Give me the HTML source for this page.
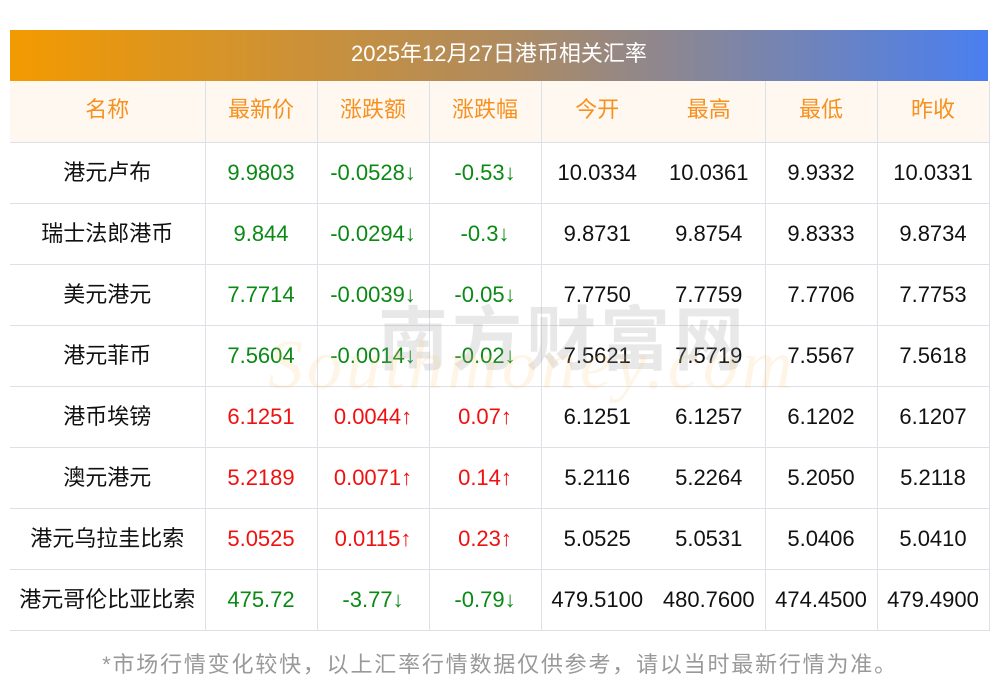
<!DOCTYPE html>
<html><head><meta charset="utf-8"><style>
body{margin:0;width:1000px;height:697px;background:#fff;font-family:"Liberation Sans","Noto Sans CJK SC",sans-serif;position:relative;overflow:hidden}
.bar{position:absolute;left:10px;top:30px;width:978px;height:51px;background:linear-gradient(90deg,#f39a00,#b08b5e 50%,#4a7ff0);color:#fff;font-size:22px;line-height:47px;text-align:center}
table{position:absolute;left:10px;top:81px;width:979px;border-collapse:collapse;table-layout:fixed}
tr{height:61px}
td{height:61px;box-sizing:border-box;border-bottom:1px solid #dfdfe8;text-align:center;font-size:22px;line-height:24px;color:#111;padding:0;overflow:hidden}
tr:first-child td{background:#fff8f0;color:#f7901e;padding-bottom:3px}
.l{border-right:1px solid #dfdfe8}
.g{color:#0a8a14}.r{color:#f01010}
.note{position:absolute;top:650px;left:0;width:1000px;text-align:center;font-size:22px;line-height:30px;color:#999;letter-spacing:1.8px}
.wm{position:absolute;font-size:70px;color:rgba(150,150,150,.22);left:378px;top:284px;letter-spacing:4px;font-weight:bold}
.wm2{position:absolute;font-family:"Liberation Serif",serif;font-style:italic;font-size:70px;color:rgba(250,200,120,.18);left:268px;top:326px;letter-spacing:4px}
</style></head><body>
<div class="bar">2025年12月27日港币相关汇率</div>
<table>
<colgroup><col style="width:195px"><col style="width:112px"><col style="width:112px"><col style="width:112px"><col style="width:112px"><col style="width:112px"><col style="width:112px"><col style="width:112px"></colgroup>
<tr><td class="l">名称</td><td class="l">最新价</td><td class="l">涨跌额</td><td class="l">涨跌幅</td><td>今开</td><td class="l">最高</td><td class="l">最低</td><td class="l">昨收</td></tr>
<tr><td class="l">港元卢布</td><td class="l g">9.9803</td><td class="l g">-0.0528↓</td><td class="l g">-0.53↓</td><td>10.0334</td><td class="l">10.0361</td><td class="l">9.9332</td><td class="l">10.0331</td></tr>
<tr><td class="l">瑞士法郎港币</td><td class="l g">9.844</td><td class="l g">-0.0294↓</td><td class="l g">-0.3↓</td><td>9.8731</td><td class="l">9.8754</td><td class="l">9.8333</td><td class="l">9.8734</td></tr>
<tr><td class="l">美元港元</td><td class="l g">7.7714</td><td class="l g">-0.0039↓</td><td class="l g">-0.05↓</td><td>7.7750</td><td class="l">7.7759</td><td class="l">7.7706</td><td class="l">7.7753</td></tr>
<tr><td class="l">港元菲币</td><td class="l g">7.5604</td><td class="l g">-0.0014↓</td><td class="l g">-0.02↓</td><td>7.5621</td><td class="l">7.5719</td><td class="l">7.5567</td><td class="l">7.5618</td></tr>
<tr><td class="l">港币埃镑</td><td class="l r">6.1251</td><td class="l r">0.0044↑</td><td class="l r">0.07↑</td><td>6.1251</td><td class="l">6.1257</td><td class="l">6.1202</td><td class="l">6.1207</td></tr>
<tr><td class="l">澳元港元</td><td class="l r">5.2189</td><td class="l r">0.0071↑</td><td class="l r">0.14↑</td><td>5.2116</td><td class="l">5.2264</td><td class="l">5.2050</td><td class="l">5.2118</td></tr>
<tr><td class="l">港元乌拉圭比索</td><td class="l r">5.0525</td><td class="l r">0.0115↑</td><td class="l r">0.23↑</td><td>5.0525</td><td class="l">5.0531</td><td class="l">5.0406</td><td class="l">5.0410</td></tr>
<tr><td class="l">港元哥伦比亚比索</td><td class="l g">475.72</td><td class="l g">-3.77↓</td><td class="l g">-0.79↓</td><td>479.5100</td><td class="l">480.7600</td><td class="l">474.4500</td><td class="l">479.4900</td></tr>
</table>
<div class="wm">南方财富网</div>
<div class="wm2">Southmoney.com</div>
<div class="note">*市场行情变化较快，以上汇率行情数据仅供参考，请以当时最新行情为准。</div>
</body></html>
